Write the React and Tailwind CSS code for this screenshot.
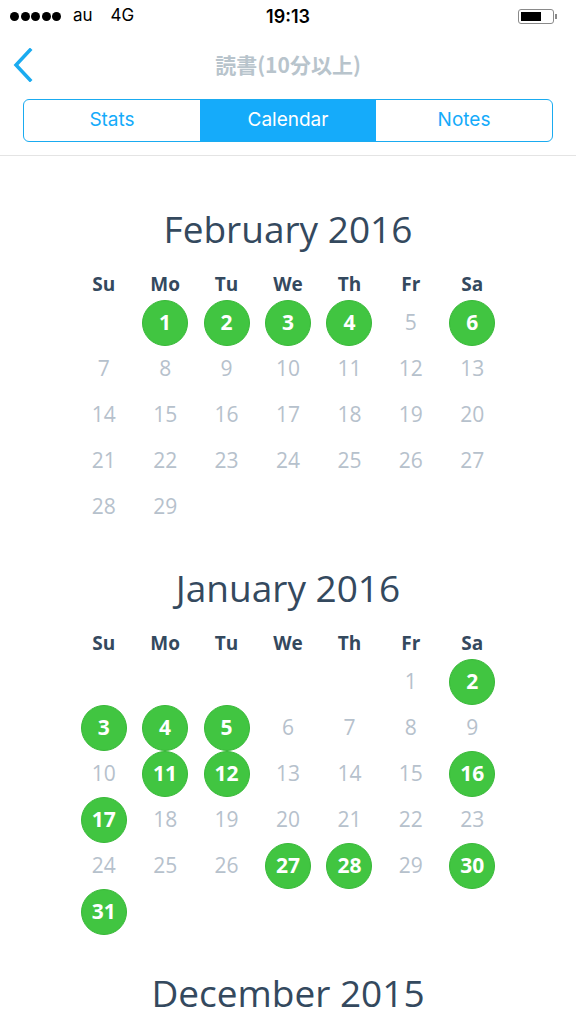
import React from "react";

const WEEK = ["Su", "Mo", "Tu", "We", "Th", "Fr", "Sa"];

const MONTHS = [
  { title: "February 2016", offset: 1, days: 29, done: [1, 2, 3, 4, 6] },
  { title: "January 2016", offset: 5, days: 31, done: [2, 3, 4, 5, 11, 12, 16, 17, 27, 28, 30, 31] },
  { title: "December 2015", offset: 2, days: 0, done: [], headingOnly: true },
];

function StatusBar() {
  return (
    <div className="relative flex h-[32px] items-center px-[10px] text-[17px] text-black font-['Inter',sans-serif]">
      <div className="flex items-center gap-[1.5px]">
        {[0, 1, 2, 3, 4].map((i) => (
          <span key={i} className="h-[9px] w-[9px] rounded-full bg-black" />
        ))}
      </div>
      <span className="ml-[12px]">au</span>
      <span className="ml-[18px]">4G</span>
      <span className="absolute left-1/2 -translate-x-1/2 text-[18px] font-semibold">19:13</span>
      <div className="ml-auto mr-[9px] flex items-center">
        <div className="flex h-[15px] w-[36px] items-center rounded-[3px] border border-[#8a8a8a] p-[2px]">
          <div className="h-full w-[20px] bg-black" />
        </div>
        <div className="ml-[1px] h-[5px] w-[2px] bg-[#8a8a8a]" />
      </div>
    </div>
  );
}

function NavBar() {
  return (
    <div className="relative flex h-[66px] items-center justify-center">
      <svg
        className="absolute left-[12px] top-[16px]"
        width="22"
        height="34"
        viewBox="0 0 22 34"
        fill="none"
      >
        <path d="M18 2 L4 17 L18 32" stroke="#1aabf0" strokeWidth="3.5" strokeLinecap="square" />
      </svg>
      <span className="text-[21px] font-bold text-[#b8c4cc] font-['Noto_Sans_CJK_JP',sans-serif]">
        読書(10分以上)
      </span>
    </div>
  );
}

function Segments() {
  const tabs = ["Stats", "Calendar", "Notes"];
  return (
    <div className="border-b border-[#e4e4e4] px-[23px] pb-[13px] pt-px">
      <div className="grid h-[43px] grid-cols-3 overflow-hidden rounded-[6px] border border-[#1aabf0] font-['Inter',sans-serif] text-[19px]">
        {tabs.map((t) => (
          <div
            key={t}
            className={
              t === "Calendar"
                ? "flex items-center justify-center bg-[#15abfa] text-white"
                : "flex items-center justify-center text-[#15abfa]"
            }
          >
            {t}
          </div>
        ))}
      </div>
    </div>
  );
}

function Month({ month }) {
  const cells = [];
  for (let i = 0; i < month.offset; i++) cells.push(null);
  for (let d = 1; d <= month.days; d++) cells.push(d);

  return (
    <div>
      <h2 className="text-center text-[37px] leading-[44px] text-[#34495e]">{month.title}</h2>
      {!month.headingOnly && (
        <div className="mx-auto mt-[18px] grid w-[430px] grid-cols-7">
          {WEEK.map((w) => (
            <div key={w} className="flex h-[31px] items-center justify-center text-[19px] font-bold text-[#34495e]">
              {w}
            </div>
          ))}
          {cells.map((d, i) => (
            <div key={i} className="flex h-[46px] items-center justify-center">
              {d === null ? null : month.done.includes(d) ? (
                <span className="flex h-[46px] w-[46px] items-center justify-center rounded-full border border-[#38b838] bg-[#41c541] text-[21px] font-bold text-white">
                  {d}
                </span>
              ) : (
                <span className="text-[21px] text-[#b6c1cc]">{d}</span>
              )}
            </div>
          ))}
        </div>
      )}
    </div>
  );
}

export default function App() {
  return (
    <div className="h-[1024px] overflow-hidden bg-white">
      <StatusBar />
      <NavBar />
      <Segments />
      <div className="flex flex-col gap-[36px] pt-[51px] font-['Open_Sans',sans-serif]">
        {MONTHS.map((m) => (
          <Month key={m.title} month={m} />
        ))}
      </div>
    </div>
  );
}
